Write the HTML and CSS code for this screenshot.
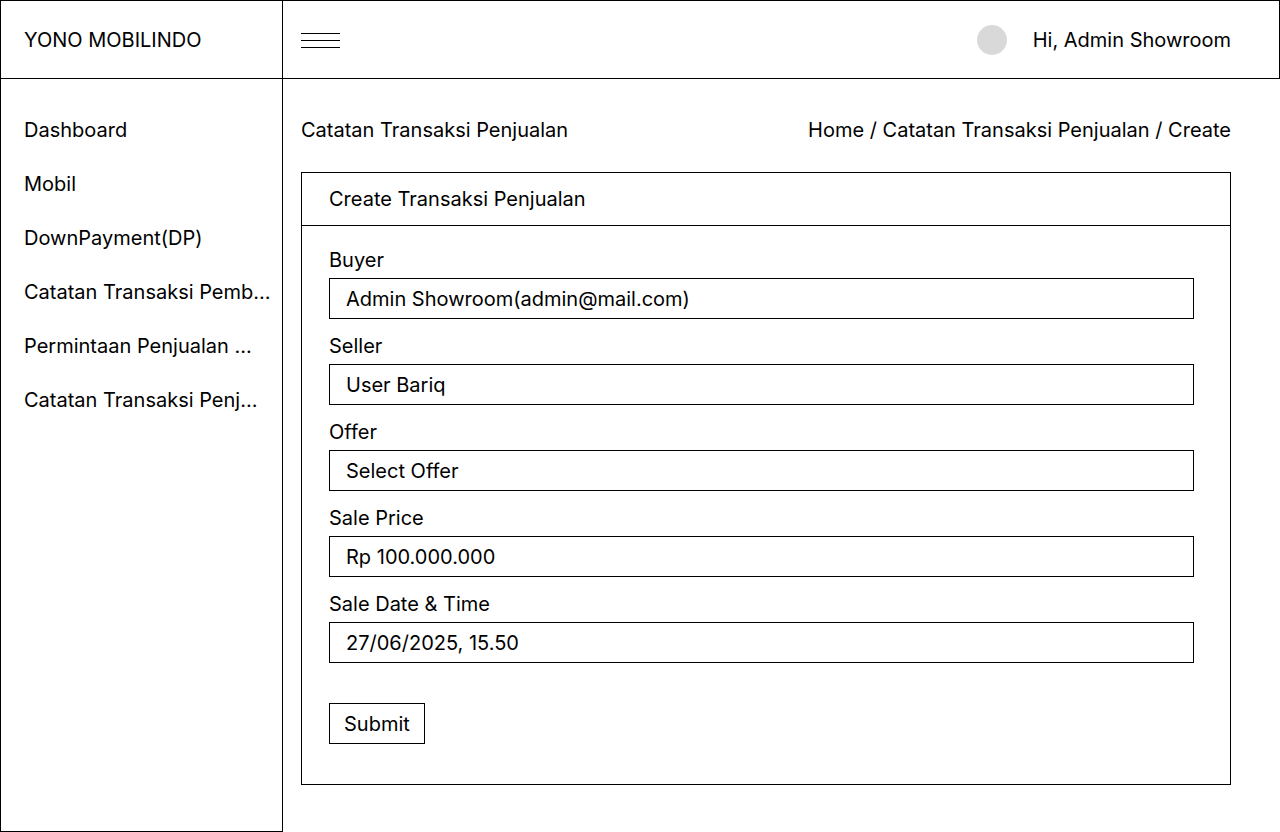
FILE: index.html
```html
<!DOCTYPE html>
<html lang="id">
<head>
<meta charset="utf-8">
<title>Create Transaksi Penjualan</title>
<link rel="stylesheet" href="styles.css">
</head>
<body>
<header class="topbar">
  <div class="brand">YONO MOBILINDO</div>
  <div class="topbar-main">
    <button class="hamburger" type="button" aria-label="Menu">
      <svg width="39" height="15" viewBox="0 0 39 15" aria-hidden="true">
        <line x1="0" y1="0.5" x2="39" y2="0.5" stroke="#000" stroke-width="1"/>
        <line x1="0" y1="7.5" x2="39" y2="7.5" stroke="#000" stroke-width="1"/>
        <line x1="0" y1="14.5" x2="39" y2="14.5" stroke="#000" stroke-width="1"/>
      </svg>
    </button>
    <div class="user">
      <span class="avatar"></span>
      <span class="user-name">Hi, Admin Showroom</span>
    </div>
  </div>
</header>
<div class="layout">
  <nav class="sidebar">
    <a class="nav-item" href="#">Dashboard</a>
    <a class="nav-item" href="#">Mobil</a>
    <a class="nav-item" href="#">DownPayment(DP)</a>
    <a class="nav-item" href="#" title="Catatan Transaksi Pembelian">Catatan Transaksi Pemb...</a>
    <a class="nav-item" href="#" title="Permintaan Penjualan Mobil">Permintaan Penjualan ...</a>
    <a class="nav-item" href="#" title="Catatan Transaksi Penjualan">Catatan Transaksi Penj...</a>
  </nav>
  <main class="content">
    <div class="page-head">
      <h1 class="page-title">Catatan Transaksi Penjualan</h1>
      <div class="breadcrumb">Home / Catatan Transaksi Penjualan / Create</div>
    </div>
    <section class="card">
      <div class="card-header">Create Transaksi Penjualan</div>
      <form class="card-body">
        <div class="field">
          <label class="label">Buyer</label>
          <div class="input">Admin Showroom(admin@mail.com)</div>
        </div>
        <div class="field">
          <label class="label">Seller</label>
          <div class="input">User Bariq</div>
        </div>
        <div class="field">
          <label class="label">Offer</label>
          <div class="input">Select Offer</div>
        </div>
        <div class="field">
          <label class="label">Sale Price</label>
          <div class="input">Rp 100.000.000</div>
        </div>
        <div class="field">
          <label class="label">Sale Date &amp; Time</label>
          <div class="input">27/06/2025, 15.50</div>
        </div>
        <div class="actions">
          <button class="btn" type="button">Submit</button>
        </div>
      </form>
    </section>
  </main>
</div>
</body>
</html>
```
FILE: styles.css
```css
* { box-sizing: border-box; }
html, body { margin: 0; padding: 0; }
body {
  font-family: Inter, "Noto Sans", "Liberation Sans", sans-serif;
  font-size: 20px;
  line-height: 24px;
  color: #000;
  background: #fff;
  width: 1280px;
  height: 832px;
  overflow: hidden;
}

.topbar {
  display: flex;
  height: 79px;
  border: 1px solid #000;
}
.brand {
  width: 282px;
  flex: none;
  border-right: 1px solid #000;
  padding-left: 23px;
  display: flex;
  align-items: center;
  padding-top: 1px;
}
.topbar-main {
  flex: 1;
  display: flex;
  align-items: center;
  justify-content: space-between;
  padding-left: 18px;
  padding-right: 48px;
}
.hamburger {
  border: 0;
  background: none;
  padding: 0;
  margin: 0;
  display: block;
  height: 15px;
  margin-top: 1px;
}
.hamburger svg { display: block; }
.user {
  display: flex;
  align-items: center;
  gap: 26px;
  padding-top: 1px;
}
.avatar {
  width: 30px;
  height: 30px;
  border-radius: 50%;
  background: #d9d9d9;
  display: block;
  margin-left: 1px;
}

.layout {
  display: flex;
  align-items: flex-start;
}
.sidebar {
  width: 283px;
  flex: none;
  height: 753px;
  border: 1px solid #000;
  border-top: 0;
  padding: 24px 4px 0 23px;
  display: flex;
  flex-direction: column;
}
.nav-item {
  color: #000;
  text-decoration: none;
  padding: 15px 0;
  white-space: nowrap;
}

.content {
  flex: 1;
  padding: 39px 49px 0 18px;
}
.page-head {
  display: flex;
  justify-content: space-between;
  align-items: center;
}
.page-title {
  margin: 0;
  font-size: 20px;
  font-weight: 400;
  line-height: 24px;
}
.card {
  margin-top: 30px;
  border: 1px solid #000;
}
.card-header {
  padding: 14px 27px 14px;
  border-bottom: 1px solid #000;
}
.card-body {
  margin: 0;
  padding: 22px 36px 40px 27px;
  display: flex;
  flex-direction: column;
  gap: 15px;
}
.field {
  display: flex;
  flex-direction: column;
  gap: 6px;
}
.label { display: block; }
.input {
  height: 41px;
  border: 1px solid #000;
  padding: 0 16px;
  display: flex;
  align-items: center;
}
.actions {
  padding-top: 25px;
}
.btn {
  font: inherit;
  color: #000;
  background: #fff;
  border: 1px solid #000;
  border-radius: 0;
  height: 41px;
  padding: 0 14px;
  margin: 0;
}
```
